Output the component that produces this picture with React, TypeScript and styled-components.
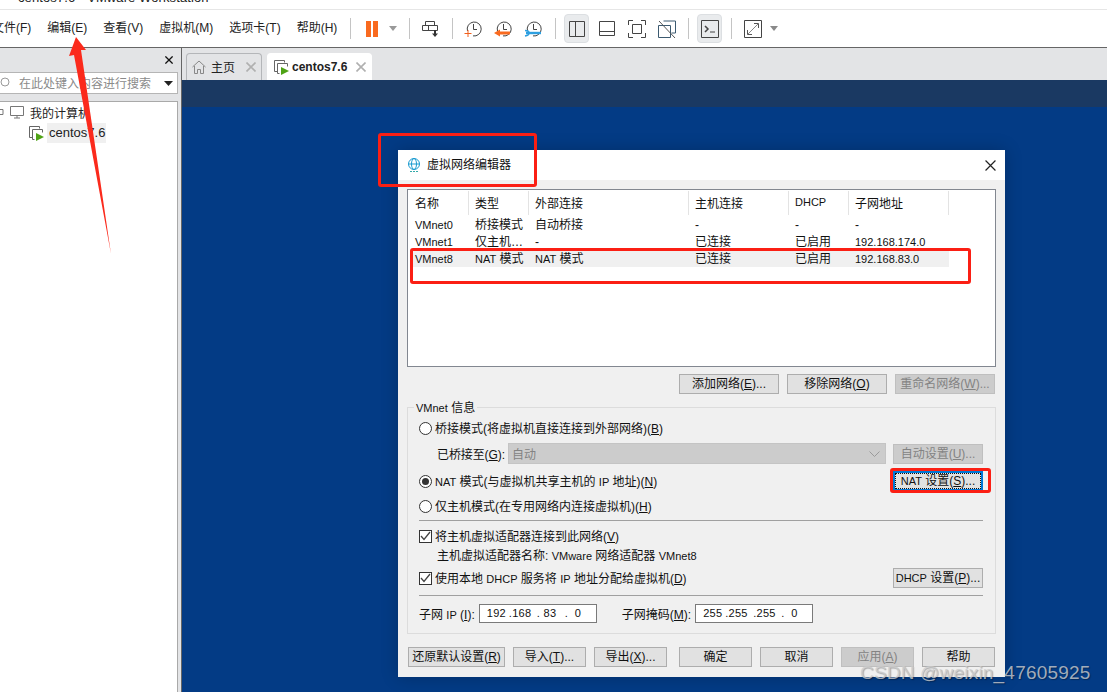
import React from "react";
import styled, { createGlobalStyle } from "styled-components";

const Global = createGlobalStyle`
  html, body { margin: 0; padding: 0; background: #fff; }
  body { font-family: "Liberation Sans", "Noto Sans CJK SC", sans-serif; font-size: 12px; color: #111; }
  * { box-sizing: border-box; }
`;

const Page = styled.div`
  position: relative; width: 1107px; height: 692px; overflow: hidden;
  display: flex; flex-direction: column; background: #fff;
`;
const TitleStrip = styled.div`
  height: 10px; overflow: hidden; padding-left: 18px; flex: none; border-bottom: 1px solid #e6e6e6;
  font-size: 13px; line-height: 14px; color: #222;
`;
const TitleText = styled.div` margin-top: -9px; letter-spacing: 0.1px; `;
const Toolbar = styled.div`
  height: 38px; flex: none; display: flex; align-items: center; background: #fff;
  border-bottom: 1px solid #666;
`;
const MenuBar = styled.div` display: flex; gap: 16px; margin-left: -8px; margin-top: -4px; width: 345px; color: #222; `;
const MenuItem = styled.span` white-space: nowrap; `;
const Sep = styled.span<{ $ml: number }>`
  width: 1px; height: 21px; background: #c4c4c4; flex: none; margin-left: ${p => p.$ml}px;
`;
const Tool = styled.span<{ $w?: number; $ml?: number; $on?: boolean }>`
  width: ${p => p.$w ?? 30}px; height: 29px; flex: none; margin-left: ${p => p.$ml ?? 0}px;
  display: flex; align-items: center; justify-content: center;
  ${p => p.$on ? "background:#e9ebed;border:1px solid #dcdfe2;border-radius:4px;" : ""}
`;

const Main = styled.div` flex: 1; display: flex; min-height: 0; `;
const Side = styled.aside`
  width: 181px; flex: none; background: #e3e4e6; display: flex; flex-direction: column;
  padding-right: 3px;
`;
const SideHead = styled.div`
  height: 24px; flex: none; display: flex; align-items: center; justify-content: flex-end; padding-right: 5px;
`;
const Search = styled.div`
  height: 22px; flex: none; background: #fff; border: 1px solid #b5b5b5; border-left: 0;
  display: flex; align-items: center; padding: 0 4px 0 0; color: #8a8a8a; font-size: 12px;
`;
const SearchText = styled.span` margin-left: 5px; flex: 1; white-space: nowrap; padding-bottom: 2px; `;
const Tree = styled.div`
  flex: 1; margin-top: 7px; background: #fff; border: 1px solid #a9a9a9; border-left: 0; border-bottom: 0;
  color: #222; display: flex; flex-direction: column; gap: 1px;
`;
const TreeRow = styled.div<{ $indent: number }>`
  height: 20px; display: flex; align-items: center; padding-left: ${p => p.$indent}px;
`;
const RootLabel = styled.span` margin-left: 6px; white-space: nowrap; `;
const NodeLabel = styled.span`
  margin-left: 2px; background: #f0f0f0; height: 20px; line-height: 20px; width: 59px; padding-left: 2px;
  font-size: 13px; white-space: nowrap;
`;

const Work = styled.section`
  flex: 1; display: flex; flex-direction: column; border-left: 1px solid #666; min-width: 0;
`;
const Tabs = styled.div`
  height: 32px; flex: none; background: #e3e4e6; display: flex; align-items: flex-end; gap: 5px; padding-left: 4px;
`;
const Tab = styled.div<{ $active?: boolean; $w: number }>`
  width: ${p => p.$w}px; height: 27px; display: flex; align-items: center; padding: 0 5px 0 ${p => p.$active ? 6 : 5}px;
  background: ${p => p.$active ? "#fff" : "#e3e4e6"};
  border: 1px solid ${p => p.$active ? "#fff" : "#b4b6b9"}; border-bottom: 0; border-radius: 4px 4px 0 0;
  font-weight: ${p => p.$active ? 700 : 400}; color: #222;
`;
const TabLabel = styled.span<{ $ml: number }>` margin-left: ${p => p.$ml}px; flex: 1; white-space: nowrap; padding-bottom: 1px; `;
const Band = styled.div` height: 27px; flex: none; background: #1a3962; `;
const Desk = styled.div` flex: 1; background: #033b85; `;

const Dialog = styled.div`
  position: absolute; left: 398px; top: 150px; width: 607px; height: 527px;
  background: #f0f0f0; display: flex; flex-direction: column; box-shadow: 0 0 16px rgba(0,0,0,.22);
`;
const DlgTitle = styled.header`
  height: 30px; flex: none; background: #fff; display: flex; align-items: center; padding: 0 9px;
`;
const DlgName = styled.span` margin-left: 6px; flex: 1; color: #111; padding-bottom: 3px; `;
const DlgBody = styled.div` flex: 1; padding: 9px 9px 0 9px; display: flex; flex-direction: column; `;
const List = styled.div`
  height: 178px; flex: none; background: #fff; border: 1px solid #828790; padding: 1px 0 0 3px;
`;
const cols = "58px 60px 160px 100px 60px 100px";
const HeadRow = styled.div`
  display: grid; grid-template-columns: ${cols}; width: 538px; height: 24px; margin-bottom: 1px;
`;
const HeadCell = styled.div<{ $first?: boolean }>`
  display: flex; align-items: center; padding: 0 0 2px ${p => p.$first ? 4 : 6}px; border-right: 1px solid #e3e3e3;
`;
const DataRow = styled.div<{ $sel?: boolean }>`
  display: grid; grid-template-columns: ${cols}; width: 538px; height: 17px; line-height: 16px;
  background: ${p => p.$sel ? "#f0f0f0" : "transparent"};
`;
const DataCell = styled.div<{ $first?: boolean }>`
  padding: 1px 0 0 ${p => p.$first ? 4 : 6}px; white-space: nowrap; overflow: hidden;
`;
const Lat = styled.span` font-size: 11px; `;

const Actions = styled.div` display: flex; justify-content: flex-end; gap: 8px; margin-top: 7px; padding-right: 1px; flex: none; `;
const Btn = styled.button<{ $w?: number; $off?: boolean; $focus?: boolean }>`
  width: ${p => p.$w ?? 90}px; height: 20px; flex: none; padding: 0; margin: 0;
  font: inherit; font-size: 12px; line-height: 16px; white-space: nowrap; position: relative;
  background: ${p => p.$off ? "#cccccc" : "#e1e1e1"};
  color: ${p => p.$off ? "#838383" : "#111"};
  border: 1px solid ${p => p.$off ? "#bfbfbf" : "#adadad"};
  ${p => p.$focus ? "border:2px solid #0078d7;outline:1px dotted #111;outline-offset:-3px;" : ""}
`;
const Group = styled.div`
  position: relative; height: 227px; flex: none; margin-top: 13px; border: 1px solid #dcdcdc;
  padding: 10px 12px 0 11px; display: flex; flex-direction: column;
`;
const Legend = styled.span`
  position: absolute; left: 6px; top: -6px; background: #f0f0f0; padding: 0 2px; line-height: 13px;
`;
const Row = styled.div<{ $mt?: number; $h?: number }>`
  display: flex; align-items: center; flex: none; height: ${p => p.$h ?? 20}px; margin-top: ${p => p.$mt ?? 0}px;
  white-space: nowrap;
`;
const Label = styled.span` flex: 1; padding-bottom: 2px; `;
const Radio = styled.span<{ $on?: boolean }>`
  width: 13px; height: 13px; border: 1px solid #333; border-radius: 50%; background: #fff; flex: none;
  margin-right: 3px; display: flex; align-items: center; justify-content: center;
  &::after { content: ""; width: 7px; height: 7px; border-radius: 50%; background: ${p => p.$on ? "#333" : "transparent"}; }
`;
const Check = styled.span`
  width: 13px; height: 13px; border: 1px solid #333; background: #fff; flex: none; margin-right: 3px;
  display: flex; align-items: center; justify-content: center;
`;
const BridgeLabel = styled.span` margin-left: 18px; width: 66px; flex: none; letter-spacing: -.1px; padding-bottom: 1px; `;
const AdapterLabel = styled.span` margin-left: 18px; `;
const SelectBox = styled.div`
  width: 378px; height: 21px; margin-left: 5px; margin-right: 7px; background: #ccc; border: 1px solid #c4c4c4; color: #838383;
  display: flex; align-items: center; justify-content: space-between; padding: 0 5px 0 3px; flex: none;
`;
const Rule = styled.div<{ $mt: number }>` height: 1px; background: #a0a0a0; margin-top: ${p => p.$mt}px; flex: none; `;
const IpBox = styled.div`
  width: 118px; height: 19px; background: #fff; border: 1px solid #7a7a7a; margin-left: 4px; flex: none;
  display: grid; grid-template-columns: 22px 28px 28px 1fr; padding-left: 7px; align-items: center; white-space: pre;
  font-size: 11px; letter-spacing: .3px;
`;
const Gap = styled.span<{ $w: number }>` width: ${p => p.$w}px; flex: none; `;
const Footer = styled.div` display: flex; justify-content: space-between; margin-top: 13px; padding: 0 1px; flex: none; `;
const FooterGroup = styled.div` display: flex; gap: 8px; `;

const Mark = styled.div<{ $x: number; $y: number; $w: number; $h: number }>`
  position: absolute; left: ${p => p.$x}px; top: ${p => p.$y}px; width: ${p => p.$w}px; height: ${p => p.$h}px;
  border: 3px solid #fb1f14; border-radius: 3px; pointer-events: none;
`;
const ArrowLayer = styled.svg`
  position: absolute; left: 0; top: 0; pointer-events: none;
`;
const Watermark = styled.div`
  position: absolute; left: 860px; top: 661px; font-size: 19px; line-height: 23px; white-space: nowrap; letter-spacing: .2px;
  color: rgba(205,205,205,.8); text-shadow: 1px 1px 1px rgba(0,0,0,.3);
`;

const Caret = ({ c = "#777" }: { c?: string }) => (
  <svg width="8" height="5" viewBox="0 0 8 5"><path d="M0 0h8L4 5z" fill={c} /></svg>
);
const Ico = ({ w = 18, h = 18, children }: { w?: number; h?: number; children: React.ReactNode }) => (
  <svg width={w} height={h} viewBox={`0 0 ${w} ${h}`} fill="none" stroke="#444" strokeWidth="1">{children}</svg>
);
const Clock = ({ children }: { children?: React.ReactNode }) => (
  <Ico w={18} h={18}>
    <path d="M3.5 11A7 7 0 1 1 9 15.9" />
    <path d="M9.5 4v5.5h3.5" />
    {children}
  </Ico>
);
const VmIcon = () => (
  <svg width="16" height="15" viewBox="0 0 16 15" fill="none" stroke="#666">
    <path d="M3.5 11.5H.5V.5h10v2" /><path d="M5.5 13.5h-2v-10h10v3" />
    <path d="M7 7v8l8-4z" fill="#4fa316" stroke="none" />
  </svg>
);
const X = ({ c = "#111", s = 10, sw = 1.2 }: { c?: string; s?: number; sw?: number }) => (
  <svg width={s} height={s} viewBox="0 0 10 10" stroke={c} strokeWidth={sw}><path d="M.5.5l9 9M9.5.5l-9 9" /></svg>
);
const Tick = () => (
  <svg width="11" height="10" viewBox="0 0 11 10" fill="none" stroke="#444" strokeWidth="1.3"><path d="M1 5l3 3.500L10 1" /></svg>
);

export default function App() {
  return (
    <Page>
      <Global />
      <TitleStrip><TitleText>centos7.6 - VMware Workstation</TitleText></TitleStrip>
      <Toolbar>
        <MenuBar>
          <MenuItem>文件(F)</MenuItem>
          <MenuItem>编辑(E)</MenuItem>
          <MenuItem>查看(V)</MenuItem>
          <MenuItem>虚拟机(M)</MenuItem>
          <MenuItem>选项卡(T)</MenuItem>
          <MenuItem>帮助(H)</MenuItem>
        </MenuBar>
        <Sep $ml={13} />
        <Tool $w={32} $ml={5}>
          <svg width="12" height="16" viewBox="0 0 12 16" fill="#f96a1f"><rect width="5" height="16" /><rect x="7" width="5" height="16" /></svg>
        </Tool>
        <Tool $w={10}><Caret c="#999" /></Tool>
        <Sep $ml={11} />
        <Tool $ml={6}>
          <Ico w={18} h={18}>
            <path d="M3.5 5.500v-4h9v4" /><path d="M.5 5.500h15v5H.5z" /><path d="M6.500 5.500v5" />
            <path d="M13 10v4" stroke="#333" strokeWidth="2" /><path d="M10 13.500h6l-3 3.500z" fill="#333" stroke="none" />
          </Ico>
        </Tool>
        <Sep $ml={6} />
        <Tool $ml={5}>
          <Clock><path d="M.5 13.500h7M4 10v7" stroke="#f2601c" /></Clock>
        </Tool>
        <Tool>
          <Clock><path d="M5 13h11" stroke="#f96a1f" strokeWidth="3" /><path d="M0 13l6-3.500v7z" fill="#f96a1f" stroke="none" /></Clock>
        </Tool>
        <Tool>
          <Clock><path d="M2 13h15" stroke="#2d9fe0" strokeWidth="2.400" /><path d="M1 10.500c3 0 4 1 4 2.500s-1 2.500-4 3" stroke="#2d9fe0" strokeWidth="1.600" /></Clock>
        </Tool>
        <Sep $ml={7} />
        <Tool $w={25} $ml={8} $on>
          <Ico w={16} h={16}><path d="M.5.5h15v15H.5zM6.500.5v15" /></Ico>
        </Tool>
        <Tool $ml={3}>
          <Ico w={16} h={16}><path d="M.5.5h15v14H.5zM.5 10.500h15" /></Ico>
        </Tool>
        <Tool>
          <Ico w={18} h={18}>
            <path d="M.5 5V.5H5M13 .5h4.500V5M17.500 13v4.500H13M5 17.500H.5V13" /><path d="M4.500 4.500h9v9h-9z" />
          </Ico>
        </Tool>
        <Tool>
          <Ico w={18} h={18}>
            <path d="M5.500 1h12v12h-4M.5 5.500h12v12H.5z" stroke="#3c5a70" /><path d="M1 1l16 17" stroke="#555" />
          </Ico>
        </Tool>
        <Sep $ml={6} />
        <Tool $w={25} $ml={8} $on>
          <Ico w={18} h={18}><path d="M.5.5h17v17H.5z" /><path d="M4 6l3 3-3 3" strokeWidth="1.500" /><path d="M9 12h5" /></Ico>
        </Tool>
        <Sep $ml={9} />
        <Tool $ml={6}>
          <Ico w={18} h={18}>
            <path d="M.5.5h17v17H.5z" /><path d="M4 14l10-10" stroke="#888" /><path d="M10 3.500h4.500V8M3.500 10v4.500H8" stroke="#555" />
          </Ico>
        </Tool>
        <Tool $w={10} $ml={1}><Caret c="#8a8a8a" /></Tool>
      </Toolbar>
      <Main>
        <Side>
          <SideHead><X s={8} sw={1.6} /></SideHead>
          <Search>
            <svg width="14" height="14" viewBox="0 0 14 14" fill="none" stroke="#999"><circle cx="5" cy="6" r="4" /></svg>
            <SearchText>在此处键入内容进行搜索</SearchText>
            <svg width="9" height="5" viewBox="0 0 9 5"><path d="M0 0h9L4.500 5z" fill="#222" /></svg>
          </Search>
          <Tree>
            <TreeRow $indent={0}>
              <svg width="24" height="14" viewBox="0 0 24 14" fill="none" stroke="#777"><path d="M-2 4.500h5v5h-5z" /><path d="M10.500 1.500h13v9h-13zM14 13h6M17 10.500V13" /></svg>
              <RootLabel>我的计算机</RootLabel>
            </TreeRow>
            <TreeRow $indent={29}>
              <VmIcon />
              <NodeLabel>centos7.6</NodeLabel>
            </TreeRow>
          </Tree>
        </Side>
        <Work>
          <Tabs>
            <Tab $w={76}>
              <svg width="14" height="14" viewBox="0 0 14 14" fill="none" stroke="#888"><path d="M.5 7L7 1l6.500 6M2.500 6v7.500h3v-4h3v4h3V6" /></svg>
              <TabLabel $ml={5}>主页</TabLabel>
              <X c="#b0b0b0" s={10} sw={1.6} />
            </Tab>
            <Tab $w={105} $active>
              <VmIcon />
              <TabLabel $ml={2}>centos7.6</TabLabel>
              <X c="#b0b0b0" s={10} sw={1.6} />
            </Tab>
          </Tabs>
          <Band />
          <Desk />
        </Work>
      </Main>

      <Dialog>
        <DlgTitle>
          <svg width="14" height="15" viewBox="0 0 14 15" fill="none" stroke="#1a9bd0">
            <circle cx="7" cy="6" r="5.500" /><ellipse cx="7" cy="6" rx="2.500" ry="5.500" /><path d="M1.500 6h11" />
            <path d="M3 13.500h8" stroke="#3aa" strokeDasharray="2 1" />
          </svg>
          <DlgName>虚拟网络编辑器</DlgName>
          <X c="#222" s={11} sw={1.1} />
        </DlgTitle>
        <DlgBody>
          <List>
            <HeadRow>
              <HeadCell $first>名称</HeadCell>
              <HeadCell>类型</HeadCell>
              <HeadCell>外部连接</HeadCell>
              <HeadCell>主机连接</HeadCell>
              <HeadCell><Lat>DHCP</Lat></HeadCell>
              <HeadCell>子网地址</HeadCell>
            </HeadRow>
            <DataRow>
              <DataCell $first><Lat>VMnet0</Lat></DataCell><DataCell>桥接模式</DataCell><DataCell>自动桥接</DataCell>
              <DataCell>-</DataCell><DataCell>-</DataCell><DataCell>-</DataCell>
            </DataRow>
            <DataRow>
              <DataCell $first><Lat>VMnet1</Lat></DataCell><DataCell>仅主机…</DataCell><DataCell>-</DataCell>
              <DataCell>已连接</DataCell><DataCell>已启用</DataCell><DataCell><Lat>192.168.174.0</Lat></DataCell>
            </DataRow>
            <DataRow $sel>
              <DataCell $first><Lat>VMnet8</Lat></DataCell><DataCell><Lat>NAT</Lat> 模式</DataCell><DataCell><Lat>NAT</Lat> 模式</DataCell>
              <DataCell>已连接</DataCell><DataCell>已启用</DataCell><DataCell><Lat>192.168.83.0</Lat></DataCell>
            </DataRow>
          </List>
          <Actions>
            <Btn $w={100}>添加网络(<u>E</u>)...</Btn>
            <Btn $w={100}>移除网络(<u>O</u>)</Btn>
            <Btn $w={100} $off>重命名网络(<u>W</u>)...</Btn>
          </Actions>
          <Group>
            <Legend><Lat>VMnet</Lat> 信息</Legend>
            <Row><Radio /><Label>桥接模式(将虚拟机直接连接到外部网络)(<u>B</u>)</Label></Row>
            <Row $mt={5} $h={21}>
              <BridgeLabel>已桥接至(<u>G</u>):</BridgeLabel>
              <SelectBox>
                <span>自动</span>
                <svg width="11" height="6" viewBox="0 0 11 6" fill="none" stroke="#9a9a9a"><path d="M.5.5l5 5 5-5" /></svg>
              </SelectBox>
              <Btn $off>自动设置(<u>U</u>)...</Btn>
            </Row>
            <Row $mt={7}>
              <Radio $on /><Label><Lat>NAT</Lat> 模式(与虚拟机共享主机的 <Lat>IP</Lat> 地址)(<u>N</u>)</Label>
              <Btn $focus><Lat>NAT</Lat> 设置(<u>S</u>)...</Btn>
            </Row>
            <Row $mt={5}><Radio /><Label>仅主机模式(在专用网络内连接虚拟机)(<u>H</u>)</Label></Row>
            <Rule $mt={4} />
            <Row $mt={5}>
              <Check><Tick /></Check>
              <Label>将主机虚拟适配器连接到此网络(<u>V</u>)</Label>
            </Row>
            <Row $h={17}><AdapterLabel>主机虚拟适配器名称: <Lat>VMware</Lat> 网络适配器 <Lat>VMnet8</Lat></AdapterLabel></Row>
            <Row $mt={5}>
              <Check><Tick /></Check>
              <Label>使用本地 <Lat>DHCP</Lat> 服务将 <Lat>IP</Lat> 地址分配给虚拟机(<u>D</u>)</Label>
              <Btn><Lat>DHCP</Lat> 设置(<u>P</u>)...</Btn>
            </Row>
            <Rule $mt={7} />
            <Row $mt={7}>
              <span>子网 <Lat>IP</Lat> (<u>I</u>):</span>
              <IpBox><span>192</span><span>.168</span><span>. 83</span><span>.  0</span></IpBox>
              <Gap $w={25} />
              <span>子网掩码(<u>M</u>):</span>
              <IpBox><span>255</span><span>.255</span><span>.255</span><span>.  0</span></IpBox>
            </Row>
          </Group>
          <Footer>
            <FooterGroup>
              <Btn $w={97}>还原默认设置(<u>R</u>)</Btn>
              <Btn $w={73}>导入(<u>T</u>)...</Btn>
              <Btn $w={73}>导出(<u>X</u>)...</Btn>
            </FooterGroup>
            <FooterGroup>
              <Btn $w={73}>确定</Btn>
              <Btn $w={73}>取消</Btn>
              <Btn $w={73} $off>应用(<u>A</u>)</Btn>
              <Btn $w={73}>帮助</Btn>
            </FooterGroup>
          </Footer>
        </DlgBody>
      </Dialog>

      <Mark $x={378} $y={133} $w={159} $h={54} />
      <Mark $x={410} $y={248} $w={561} $h={36} />
      <Mark $x={890} $y={468} $w={101} $h={25} />
      <ArrowLayer width="130" height="260" viewBox="0 0 130 260">
        <path d="M76 37L86 50 81 50 111 254 74 55 69 56z" fill="#fb2a1c" />
      </ArrowLayer>
      <Watermark>CSDN @weixin_47605925</Watermark>
    </Page>
  );
}
